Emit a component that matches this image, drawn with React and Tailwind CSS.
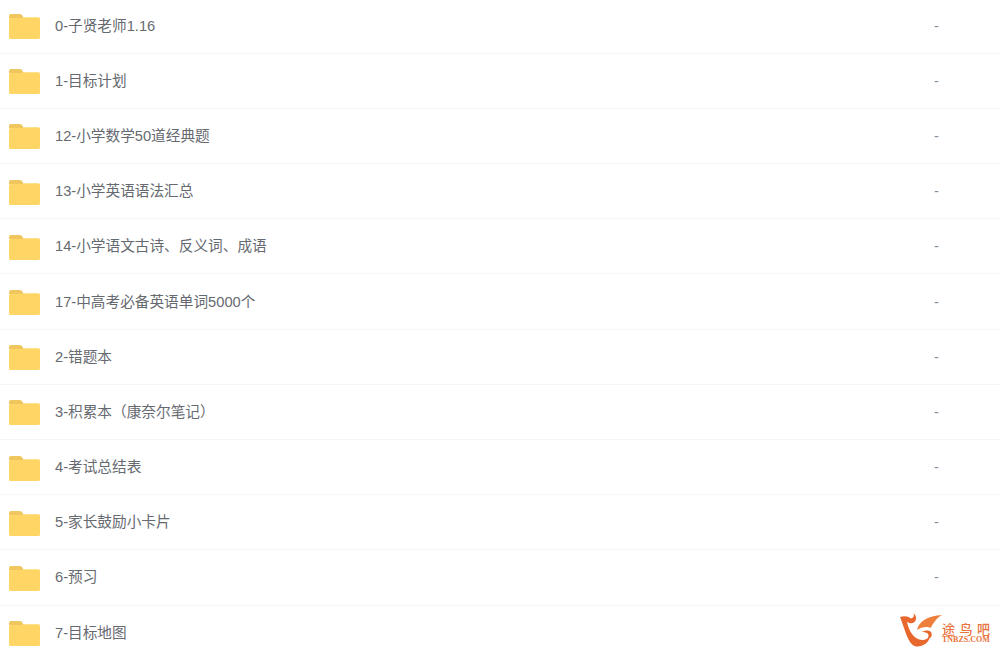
const rows = [
  { name: "0-子贤老师1.16", size: "-" },
  { name: "1-目标计划", size: "-" },
  { name: "12-小学数学50道经典题", size: "-" },
  { name: "13-小学英语语法汇总", size: "-" },
  { name: "14-小学语文古诗、反义词、成语", size: "-" },
  { name: "17-中高考必备英语单词5000个", size: "-" },
  { name: "2-错题本", size: "-" },
  { name: "3-积累本（康奈尔笔记）", size: "-" },
  { name: "4-考试总结表", size: "-" },
  { name: "5-家长鼓励小卡片", size: "-" },
  { name: "6-预习", size: "-" },
  { name: "7-目标地图", size: "" },
];

const FolderIcon = () => (
  <svg width="31" height="25" viewBox="0 0 31 25" className="shrink-0">
    <path d="M0 2a2 2 0 0 1 2-2h8.500c1.500 0 2.500.8 3.200 2.200L14.500 4H0z" fill="#f0c65e" />
    <path d="M0 5.500a1.500 1.500 0 0 1 1.500-1.500L13.500 4l1-.8h15A1.500 1.500 0 0 1 31 4.700v18.800a1.500 1.500 0 0 1-1.500 1.500h-28A1.500 1.500 0 0 1 0 23.500z" fill="#ffd666" />
  </svg>
);

const Logo = () => (
  <div className="absolute right-[10px] bottom-0 flex items-end">
    <svg width="42" height="36" viewBox="0 0 42 36" className="shrink-0">
      <path d="M0 5c4-1.500 8-1 11 1.500 2.500-.5 3.500-2.500 2.500-5 3 2 3.500 6 1 8.500-2.500 2-5.500 1.500-7.500-.5 1.500 8 5 14.500 11 17.500 5 2 9 .5 12-2.500-1 6-7 10.500-14 10C8 33 5 17 0 5z" fill="#e8672c" />
      <path d="M17 18c2-9 11-14 25-15-5.500 3-8.500 8-11.500 13-3-2-9.500-1-13.500 2z" fill="#ee7f3a" />
      <path d="M22 20c3-2 7-2 9 0 2 3 0 7-4 7 2-2 2-5 0-6-2-1-3-1-5-1z" fill="#e8672c" />
    </svg>
    <div className="mb-[5px] flex w-[48px] flex-col text-[#e8733c]">
      <span className="h-[15px] text-[13px] leading-[15px] font-medium tracking-[4.500px] whitespace-nowrap [font-family:'Noto_Sans_CJK_SC',sans-serif]">途鸟吧</span>
      <span className="h-[7px] text-[8px] leading-[7px] font-bold tracking-[0px] whitespace-nowrap [font-family:'Liberation_Serif',serif]">TNBZS.COM</span>
    </div>
  </div>
);

export default function App() {
  return (
    <div className="relative h-[648px] w-[1000px] overflow-hidden bg-white [font-family:'Liberation_Sans','Noto_Sans_CJK_SC',sans-serif]">
      <div className="-mt-[1.500px]">
        {rows.map((row) => (
          <div key={row.name} className="flex h-[55.200px] items-center border-b border-[#f5f6f7] pl-[9px] pt-[2.500px] pb-[0.500px]">
            <FolderIcon />
            <span className="mb-[2px] ml-[15px] flex-1 text-[14.670px] text-[#666a70]">{row.name}</span>
            <span className="mb-[2px] w-[66px] text-[14.670px] text-[#8a8e94]">{row.size}</span>
          </div>
        ))}
      </div>
      <Logo />
    </div>
  );
}
